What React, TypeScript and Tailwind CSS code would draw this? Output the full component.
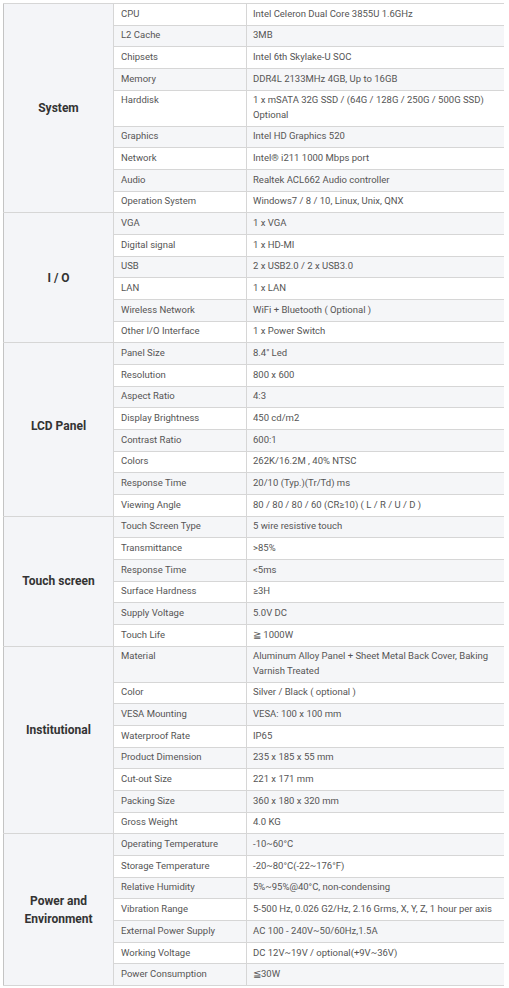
const specs = [
  {
    group: 'System',
    pad: '',
    rows: [
      ['CPU', 'Intel Celeron Dual Core 3855U 1.6GHz'],
      ['L2 Cache', '3MB'],
      ['Chipsets', 'Intel 6th Skylake-U SOC'],
      ['Memory', 'DDR4L 2133MHz 4GB, Up to 16GB'],
      ['Harddisk', '1 x mSATA 32G SSD / (64G / 128G / 250G / 500G SSD) Optional'],
      ['Graphics', 'Intel HD Graphics 520'],
      ['Network', 'Intel® i211 1000 Mbps port'],
      ['Audio', 'Realtek ACL662 Audio controller'],
      ['Operation System', 'Windows7 / 8 / 10, Linux, Unix, QNX'],
    ],
  },
  {
    group: 'I / O',
    pad: '',
    rows: [
      ['VGA', '1 x VGA'],
      ['Digital signal', '1 x HD-MI'],
      ['USB', '2 x USB2.0 / 2 x USB3.0'],
      ['LAN', '1 x LAN'],
      ['Wireless Network', 'WiFi + Bluetooth ( Optional )'],
      ['Other I/O Interface', '1 x Power Switch'],
    ],
  },
  {
    group: 'LCD Panel',
    pad: 'pb-[8px]',
    rows: [
      ['Panel Size', '8.4" Led'],
      ['Resolution', '800 x 600'],
      ['Aspect Ratio', '4:3'],
      ['Display Brightness', '450 cd/m2'],
      ['Contrast Ratio', '600:1'],
      ['Colors', '262K/16.2M , 40% NTSC'],
      ['Response Time', '20/10 (Typ.)(Tr/Td) ms'],
      ['Viewing Angle', '80 / 80 / 80 / 60 (CR≥10) ( L / R / U / D )'],
    ],
  },
  {
    group: 'Touch screen',
    pad: '',
    rows: [
      ['Touch Screen Type', '5 wire resistive touch'],
      ['Transmittance', '>85%'],
      ['Response Time', '<5ms'],
      ['Surface Hardness', '≥3H'],
      ['Supply Voltage', '5.0V DC'],
      ['Touch Life', '≧ 1000W'],
    ],
  },
  {
    group: 'Institutional',
    pad: 'pb-[20px]',
    rows: [
      ['Material', 'Aluminum Alloy Panel + Sheet Metal Back Cover, Baking Varnish Treated'],
      ['Color', 'Silver / Black ( optional )'],
      ['VESA Mounting', 'VESA: 100 x 100 mm'],
      ['Waterproof Rate', 'IP65'],
      ['Product Dimension', '235 x 185 x 55 mm'],
      ['Cut-out Size', '221 x 171 mm'],
      ['Packing Size', '360 x 180 x 320 mm'],
      ['Gross Weight', '4.0 KG'],
    ],
  },
  {
    group: 'Power and Environment',
    pad: '',
    rows: [
      ['Operating Temperature', '-10~60°C'],
      ['Storage Temperature', '-20~80°C(-22~176°F)'],
      ['Relative Humidity', '5%~95%@40°C, non-condensing'],
      ['Vibration Range', '5-500 Hz, 0.026 G2/Hz, 2.16 Grms, X, Y, Z, 1 hour per axis'],
      ['External Power Supply', 'AC 100 - 240V~50/60Hz,1.5A'],
      ['Working Voltage', 'DC 12V~19V / optional(+9V~36V)'],
      ['Power Consumption', '≦30W'],
    ],
  },
];

export default function App() {
  let n = 0;
  return (
    <div className="bg-white pt-[3px] pl-[3px] font-['Roboto',sans-serif]">
      <table className="w-[500px] table-fixed border-collapse text-[9.5px] leading-[14.3px] text-[#555]">
        <colgroup>
          <col className="w-[110px]" />
          <col className="w-[133px]" />
          <col className="w-[257px]" />
        </colgroup>
        <tbody>
          {specs.map((s) =>
            s.rows.map(([label, value], i) => {
              n += 1;
              const stripe = n % 2 === 0 ? 'bg-[#f5f6f8]' : 'bg-white';
              return (
                <tr key={s.group + label} className={stripe}>
                  {i === 0 && (
                    <td
                      rowSpan={s.rows.length}
                      className={`border border-[#d6d6d6] border-l-[#c4c4c4] bg-[#f4f5f8] px-2 text-center align-middle text-[12px] font-bold leading-[18px] text-[#333] ${s.pad}`}
                    >
                      {s.group}
                    </td>
                  )}
                  <td className="border border-[#d6d6d6] pl-[7px] pr-1 pt-[2.7px] pb-[3.7px] align-top">{label}</td>
                  <td className="border-y border-l border-[#d6d6d6] pl-[6px] pr-1 pt-[2.7px] pb-[3.7px] align-top">{value}</td>
                </tr>
              );
            })
          )}
        </tbody>
      </table>
    </div>
  );
}
